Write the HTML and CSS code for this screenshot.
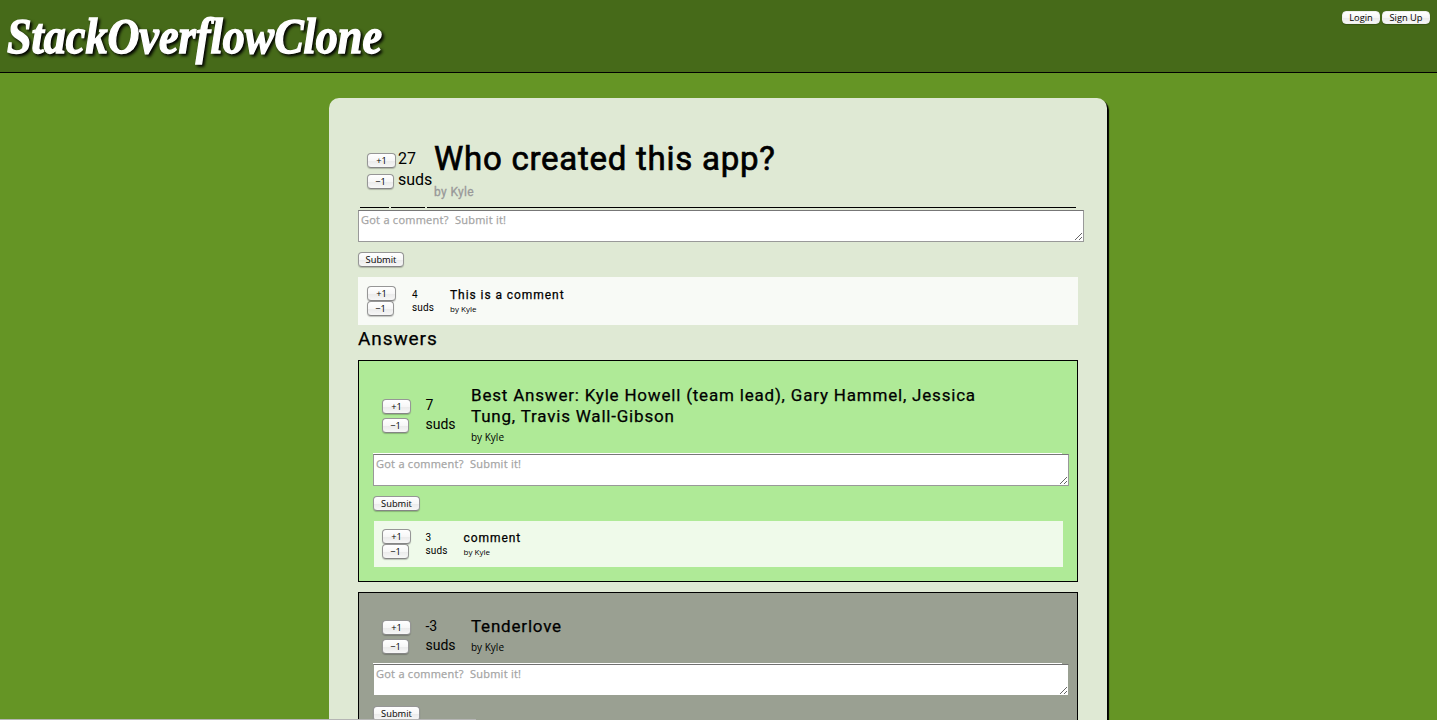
FILE: index.html
```html
<!DOCTYPE html>
<html lang="en">
<head>
<meta charset="utf-8">
<title>StackOverflowClone</title>
<link rel="stylesheet" href="styles.css">
</head>
<body>
<header class="topbar">
  <svg class="logo" width="400" height="72" role="img" aria-label="StackOverflowClone"><text x="7" y="53" textLength="375" lengthAdjust="spacingAndGlyphs">StackOverflowClone</text></svg>
  <nav class="account"><button class="btn login">Login</button><button class="btn signup">Sign Up</button></nav>
</header>
<main class="panel">
  <section class="question">
    <div class="q-votes rule"><button class="btn up">+1</button><button class="btn down">−1</button></div>
    <div class="q-score rule">27<br>suds</div>
    <div class="q-body rule"><h1><span>Who created this app?</span></h1><p>by Kyle</p></div>
  </section>
  <textarea class="reply" placeholder="Got a comment?  Submit it!"></textarea>
  <button class="btn submit">Submit</button>
  <section class="comment">
    <div class="votes"><button class="btn up">+1</button><button class="btn down">−1</button></div>
    <div class="score">4<br>suds</div>
    <div class="body"><h3><span>This is a comment</span></h3><p><span>by Kyle</span></p></div>
  </section>
  <h2><span>Answers</span></h2>
  <article class="answer best">
    <section class="entry">
      <div class="votes"><button class="btn up">+1</button><button class="btn down">−1</button></div>
      <div class="score">7<br>suds</div>
      <div class="body"><h3><span>Best Answer: Kyle Howell (team lead), Gary Hammel, Jessica</span><br>Tung, Travis Wall-Gibson</h3><p><span>by Kyle</span></p></div>
    </section>
    <textarea class="reply" placeholder="Got a comment?  Submit it!"></textarea>
    <button class="btn submit">Submit</button>
    <section class="comment nested">
      <div class="votes"><button class="btn up">+1</button><button class="btn down">−1</button></div>
      <div class="score">3<br>suds</div>
      <div class="body"><h3><span>comment</span></h3><p><span>by Kyle</span></p></div>
    </section>
  </article>
  <article class="answer poor">
    <section class="entry">
      <div class="votes"><button class="btn up">+1</button><button class="btn down">−1</button></div>
      <div class="score">-3<br>suds</div>
      <div class="body"><h3><span>Tenderlove</span></h3><p><span>by Kyle</span></p></div>
    </section>
    <textarea class="reply" placeholder="Got a comment?  Submit it!"></textarea>
    <button class="btn submit">Submit</button>
  </article>
</main>
<div class="statusbar"></div>
</body>
</html>
```
FILE: styles.css
```css
* { box-sizing: border-box; }
html, body { height: 100%; }
body { margin: 0; display: flex; flex-direction: column; overflow: hidden; background: #659525; color: #000; font-family: Roboto, sans-serif; }
h1, h2, h3, p { margin: 0; font-weight: 400; white-space: nowrap; }
h1, h2, h3 { -webkit-text-stroke: .25px #000; }
.topbar { flex: none; height: 73px; background: #466a19; border-bottom: 1px solid #000; display: flex; justify-content: space-between; align-items: flex-start; }
.logo { display: block; overflow: visible; font: italic bold 50px "Liberation Serif", serif; fill: #fff; stroke: #fff; stroke-width: 1.4px; filter: drop-shadow(2px 2px 1.5px #000); }
.account { display: flex; gap: 2px; padding: 11px 7px 0 0; }
.btn { display: block; flex: none; height: 15px; padding: 0; margin: 0; border: 1px solid #969696; border-bottom-color: #858585; border-radius: 4px; background: linear-gradient(#fff 0%, #f7f7f7 50%, #ebebeb 55%, #f7f7f7 100%); box-shadow: 0 1px 1px rgba(0,0,0,.22); font: 9.3px/13px "Open Sans", sans-serif; color: #000; text-align: center; white-space: nowrap; }
.login { width: 38px; height: 13px; line-height: 12px; border-color: #eee; }
.signup { width: 48px; height: 13px; line-height: 12px; border-color: #eee; }
.up { width: 29px; }
.down { width: 27px; }
.panel { flex: 1; min-height: 0; overflow: hidden; width: 778px; margin: 25px 0 0 329px; padding: 29px 29px 0; border-radius: 10px 10px 0 0; background: #dfe9d4; box-shadow: 2px 2px 1px #000; }
.question { display: grid; grid-template-columns: 29px 34px 649px; gap: 2px; margin-left: 2px; height: 81px; }
.rule { border-bottom: 1px solid #000; }
.q-votes { padding: 26px 0 0 7px; display: flex; flex-direction: column; gap: 6px; }
.q-score { padding: 21px 0 0 7px; font-size: 16px; line-height: 21px; }
.q-body { padding: 11px 0 0 7px; }
.q-body h1 { font-size: 33px; line-height: 42px; letter-spacing: .74px; -webkit-text-stroke-width: .7px; }
.q-body p { padding-top: 1px; font-size: 12px; line-height: 22px; letter-spacing: .35px; color: #999; -webkit-text-stroke: .3px #999; }
.reply { display: block; width: 726px; height: 32px; margin: 2px 0 10px; padding: 2px; border: 1px solid #999; border-top-color: #777; background: #fff; font: 11px/14px "Open Sans", sans-serif; letter-spacing: .25px; resize: both; overflow: hidden; outline: 0; }
.reply::placeholder { color: #a4a4a4; opacity: 1; -webkit-text-stroke: .25px #a4a4a4; }
.submit { width: 46px; }
.comment { display: grid; grid-template-columns: 45px 38px 1fr; width: 720px; height: 48px; margin-top: 10px; padding: 9px 0 0 9px; background: #f8faf6; }
.comment .score { font-size: 10px; line-height: 13px; padding-top: 2px; letter-spacing: .15px; }
.comment h3 { font-size: 12px; line-height: 16px; letter-spacing: .94px; padding-top: 1px; }
.comment p { font: 8px/12px "Open Sans", sans-serif; }
h2 { font-size: 19px; line-height: 27px; height: 35px; letter-spacing: .9px; }
.answer { border: 1px solid #000; height: 222px; margin-bottom: 10px; padding: 15px 14px 0; }
.best { background: #afea97; }
.poor { background: #9aa092; }
.entry { display: grid; grid-template-columns: 43.5px 45.5px 1fr; width: 689px; height: 78px; padding-left: 9px; border-bottom: 1px solid #fff; }
.entry .votes { display: flex; flex-direction: column; gap: 4px; padding-top: 23px; }
.entry .score { font-size: 14px; line-height: 19px; padding-top: 20px; }
.entry .body { padding-top: 9px; }
.entry h3 { font-size: 17px; line-height: 21px; letter-spacing: .8px; }
.entry p { font: 10px/20px "Open Sans", sans-serif; }
.poor .entry { height: 56px; }
.poor .entry .votes { padding-top: 12px; }
.poor .entry .score { padding-top: 9px; }
.poor .entry .body { padding-top: 8px; }
.answer .reply { width: 696px; margin-top: 0; }
.answer .submit { width: 47px; }
.poor .reply { border-color: #707070 #9aa092 #9aa092; }
.nested { grid-template-columns: 43.5px 38px 1fr; width: 689px; height: 46px; padding: 8px 0 0 8px; margin-left: 1px; background: #effaea; }
.statusbar { position: fixed; left: 0; bottom: 0; width: 476px; height: 1px; background: #b5b5b5; }
```
